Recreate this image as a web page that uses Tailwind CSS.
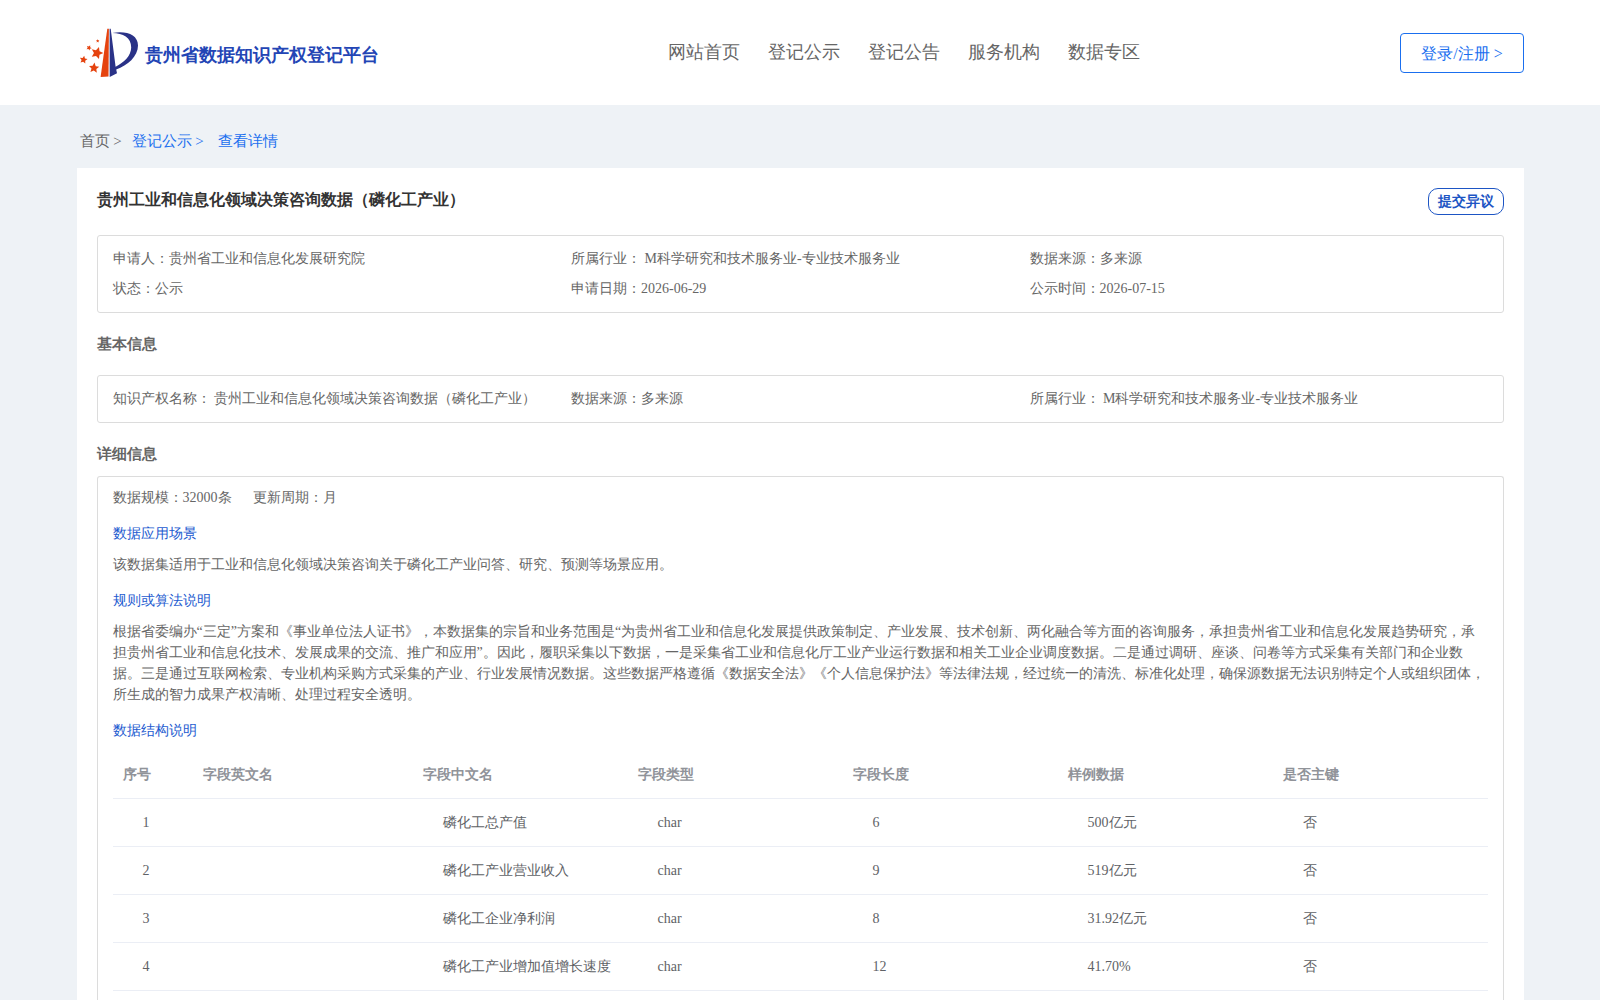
<!DOCTYPE html>
<html lang="en">
<head>
  <meta charset="UTF-8" />
  <meta name="viewport" content="width=device-width, initial-scale=1.0"/>
  <title>贵州省数据知识产权登记平台</title>
  <script src="https://cdn.jsdelivr.net/npm/@tailwindcss/browser@4"></script>
</head>
<body class="bg-[#eef2f6] h-screen overflow-hidden text-sm text-[#666] font-['Liberation_Serif',serif]">
  <!-- Header -->
  <header class="bg-white h-[105px]">
    <div class="w-[1447.4px] ml-[76.6px] h-full flex items-start">
      <div class="flex w-[591px] pt-[22px] pl-px">
        <svg class="w-16 h-[60px] shrink-0" viewBox="0 0 64 60">
          <defs>
            <path id="star" d="M0-10L2.900-3.700 9.500-3.100 4.500 1.500 5.900 8.100 0 4.800-5.900 8.100-4.500 1.500-9.500-3.100-2.900-3.700z"/>
          </defs>
          <path d="M29.300 6.700h1.600L30.500 54.500l-7.900.6z" fill="#e5430f"/>
          <path d="M31.600 6.700h1.100L37.600 44.700C46 40.500 53 34 53.200 25.500 53.300 15.500 45 11.300 34.300 11 48 8.500 60 12.500 60 23.500 60 34.500 49.500 43.500 38.200 47.500L39 51.300 31.700 55z" fill="#2a3287"/>
          <g fill="#e5430f">
            <use href="#star" transform="translate(19 31) rotate(18) scale(.64)"/>
            <use href="#star" transform="translate(11 25.800) rotate(25) scale(.28)"/>
            <use href="#star" transform="translate(19.700 19) scale(.18)"/>
            <use href="#star" transform="translate(5.500 37.700) rotate(10) scale(.41)"/>
            <use href="#star" transform="translate(16 46) rotate(5) scale(.54)"/>
          </g>
        </svg>
        <h1 class="pl-[3px] pt-[21px] text-[18px] leading-6 font-bold text-[#2345b5] whitespace-nowrap">贵州省数据知识产权登记平台</h1>
      </div>
      <nav class="flex gap-7 pt-10 text-[18px] leading-6">
        <a>网站首页</a>
        <a>登记公示</a>
        <a>登记公告</a>
        <a>服务机构</a>
        <a>数据专区</a>
      </nav>
      <button class="ml-auto mt-[33px] w-[124px] h-10 border border-[#1a6fef] rounded-[4px] text-base leading-[40px] text-[#1a6fef]">登录/注册 &gt;</button>
    </div>
  </header>

  <!-- Breadcrumb -->
  <div class="h-[63px] pl-[79.6px] pt-[26px] text-[15px] leading-5 flex text-[#1a6fef]">
    <span class="w-[52px] text-[#666]">首页 &gt;</span>
    <span class="w-[86px]">登记公示 &gt;</span>
    <span>查看详情</span>
  </div>

  <!-- Detail card -->
  <main class="w-[1447.4px] ml-[76.6px] bg-white p-5 h-[832px]">
    <div class="flex justify-between h-[47px]">
      <h2 class="text-base leading-6 font-bold text-[#333]">贵州工业和信息化领域决策咨询数据（磷化工产业）</h2>
      <button class="w-[76px] h-[27px] border border-[#1d55c4] rounded-[10px] leading-[25px] font-bold text-[#1d55c4]">提交异议</button>
    </div>

    <div class="h-[78px] border border-[#dcdcdc] rounded-[3px] px-[15px] pt-2 grid grid-cols-3 auto-rows-[30px] leading-[30px] whitespace-nowrap">
      <p>申请人：贵州省工业和信息化发展研究院</p>
      <p>所属行业： M科学研究和技术服务业-专业技术服务业</p>
      <p>数据来源：多来源</p>
      <p>状态：公示</p>
      <p>申请日期：2026-06-29</p>
      <p>公示时间：2026-07-15</p>
    </div>

    <h3 class="pt-[21px] h-[62px] text-[15px] leading-5 font-bold">基本信息</h3>
    <div class="h-12 border border-[#dcdcdc] rounded-[3px] px-[15px] pt-2 grid grid-cols-3 leading-[30px] whitespace-nowrap">
      <p>知识产权名称： 贵州工业和信息化领域决策咨询数据（磷化工产业）</p>
      <p>数据来源：多来源</p>
      <p>所属行业： M科学研究和技术服务业-专业技术服务业</p>
    </div>

    <h3 class="pt-[21px] h-[53px] text-[15px] leading-5 font-bold">详细信息</h3>
    <div class="h-[524px] border border-b-0 border-[#dcdcdc] rounded-t-[3px] px-[15px] pt-[10px] leading-[21px]">
      <div class="flex">
        <span class="w-[140px]">数据规模：32000条</span>
        <span>更新周期：月</span>
      </div>
      <h4 class="mt-[15px] text-[#1d5bd0]">数据应用场景</h4>
      <p class="mt-[10px]">该数据集适用于工业和信息化领域决策咨询关于磷化工产业问答、研究、预测等场景应用。</p>
      <h4 class="mt-[15px] text-[#1d5bd0]">规则或算法说明</h4>
      <p class="mt-[10px] whitespace-nowrap">根据省委编办“三定”方案和《事业单位法人证书》，本数据集的宗旨和业务范围是“为贵州省工业和信息化发展提供政策制定、产业发展、技术创新、两化融合等方面的咨询服务，承担贵州省工业和信息化发展趋势研究，承<br>担贵州省工业和信息化技术、发展成果的交流、推广和应用”。因此，履职采集以下数据，一是采集省工业和信息化厅工业产业运行数据和相关工业企业调度数据。二是通过调研、座谈、问卷等方式采集有关部门和企业数<br>据。三是通过互联网检索、专业机构采购方式采集的产业、行业发展情况数据。这些数据严格遵循《数据安全法》《个人信息保护法》等法律法规，经过统一的清洗、标准化处理，确保源数据无法识别特定个人或组织团体，<br>所生成的智力成果产权清晰、处理过程安全透明。</p>
      <h4 class="mt-[15px] text-[#1d5bd0]">数据结构说明</h4>

      <table class="mt-[10px] w-[1375px] table-fixed text-left text-[#606266]">
        <colgroup>
          <col class="w-20"><col class="w-[220px]"><col class="w-[215px]"><col class="w-[215px]"><col class="w-[215px]"><col class="w-[215px]"><col class="w-[215px]">
        </colgroup>
        <thead class="text-[#909399]">
          <tr class="h-[47px] border-b border-[#ebeef5]">
            <th class="px-[10px]">序号</th>
            <th class="px-[10px]">字段英文名</th>
            <th class="px-[10px]">字段中文名</th>
            <th class="px-[10px]">字段类型</th>
            <th class="px-[10px]">字段长度</th>
            <th class="px-[10px]">样例数据</th>
            <th class="px-[10px]">是否主键</th>
          </tr>
        </thead>
        <tbody id="fieldRows"></tbody>
      </table>
    </div>
  </main>

  <script>
    const fields = [
      ['', '磷化工总产值', 'char', '6', '500亿元', '否'],
      ['', '磷化工产业营业收入', 'char', '9', '519亿元', '否'],
      ['', '磷化工企业净利润', 'char', '8', '31.92亿元', '否'],
      ['', '磷化工产业增加值增长速度', 'char', '12', '41.70%', '否']
    ];

    document.getElementById('fieldRows').innerHTML = fields.map((row, i) => `
      <tr class="h-12 border-b border-[#ebeef5]">
        ${[i + 1, ...row].map(text => `<td class="pl-[30px] whitespace-nowrap">${text}</td>`).join('')}
      </tr>
    `).join('');
  </script>
</body>
</html>
